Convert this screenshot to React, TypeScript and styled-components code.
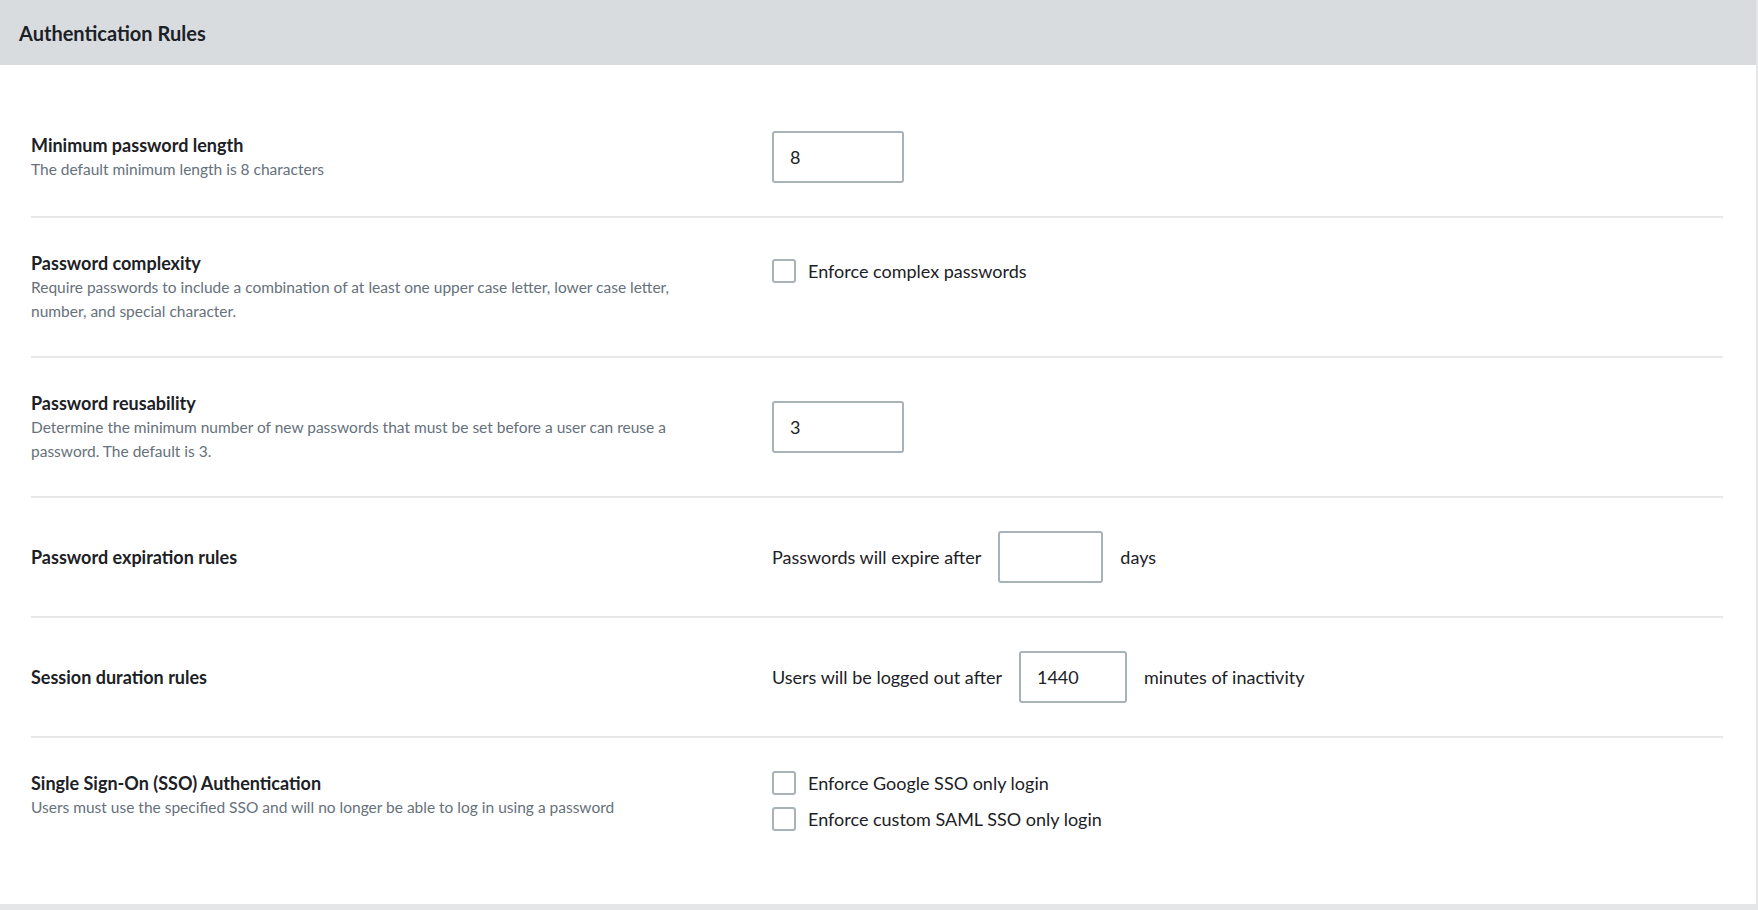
import React from "react";
import styled, { createGlobalStyle } from "styled-components";

const Global = createGlobalStyle`
  html, body { margin: 0; padding: 0; background: #fff; }
  body { font-family: Lato, "Noto Sans", sans-serif; color: #1c2126; }
`;

const Page = styled.div`
  width: 1756px;
  height: 904px;
  border-right: 2px solid #e4e6e8;
  border-bottom: 6px solid #e4e6e8;
  display: flex;
  flex-direction: column;
`;

const Header = styled.div`
  height: 65px;
  background: #d9dcdf;
  display: flex;
  align-items: center;
  padding-left: 19px;
  font-size: 20px;
  font-weight: 700;
`;

const Body = styled.div`
  padding: 33px 33px 0 31px;
  display: flex;
  flex-direction: column;
`;

const Row = styled.div<{ $center?: boolean; $last?: boolean }>`
  display: grid;
  grid-template-columns: 741px 1fr;
  align-items: ${(p) => (p.$center ? "center" : "start")};
  padding: 33px 0;
  border-bottom: ${(p) => (p.$last ? "none" : "2px solid #e6e8ea")};
`;

const Title = styled.div`
  font-size: 18px;
  font-weight: 700;
  line-height: 24px;
`;

const Desc = styled.div`
  font-size: 15.5px;
  line-height: 24px;
  color: #66717b;
  max-width: 640px;
`;

const Controls = styled.div`
  display: flex;
  align-items: center;
  gap: 17px;
  font-size: 18px;
`;

const Input = styled.input<{ $w: number }>`
  width: ${(p) => p.$w}px;
  height: 52px;
  box-sizing: border-box;
  border: 2px solid #a8b2b7;
  border-radius: 3px;
  padding: 0 16px;
  font: inherit;
  font-size: 18px;
  color: #1c2126;
`;

const CheckList = styled.div`
  display: flex;
  flex-direction: column;
  gap: 12px;
`;

const Check = styled.label`
  display: flex;
  align-items: center;
  gap: 12px;
  font-size: 18px;
  line-height: 24px;
`;

const Box = styled.span`
  width: 24px;
  height: 24px;
  box-sizing: border-box;
  border: 2px solid #a8b2b7;
  border-radius: 3px;
`;

export default function App() {
  return (
    <>
      <Global />
      <Page>
        <Header>Authentication Rules</Header>
        <Body>
          <Row $center>
            <div>
              <Title>Minimum password length</Title>
              <Desc>The default minimum length is 8 characters</Desc>
            </div>
            <Controls><Input $w={132} defaultValue="8" /></Controls>
          </Row>
          <Row>
            <div>
              <Title>Password complexity</Title>
              <Desc>Require passwords to include a combination of at least one upper case letter, lower case letter, number, and special character.</Desc>
            </div>
            <CheckList style={{ paddingTop: 8 }}>
              <Check><Box />Enforce complex passwords</Check>
            </CheckList>
          </Row>
          <Row $center>
            <div>
              <Title>Password reusability</Title>
              <Desc>Determine the minimum number of new passwords that must be set before a user can reuse a password. The default is 3.</Desc>
            </div>
            <Controls><Input $w={132} defaultValue="3" /></Controls>
          </Row>
          <Row $center>
            <Title>Password expiration rules</Title>
            <Controls>Passwords will expire after <Input $w={105} /> days</Controls>
          </Row>
          <Row $center>
            <Title>Session duration rules</Title>
            <Controls>Users will be logged out after <Input $w={108} defaultValue="1440" /> minutes of inactivity</Controls>
          </Row>
          <Row $last>
            <div>
              <Title>Single Sign-On (SSO) Authentication</Title>
              <Desc>Users must use the specified SSO and will no longer be able to log in using a password</Desc>
            </div>
            <CheckList>
              <Check><Box />Enforce Google SSO only login</Check>
              <Check><Box />Enforce custom SAML SSO only login</Check>
            </CheckList>
          </Row>
        </Body>
      </Page>
    </>
  );
}
